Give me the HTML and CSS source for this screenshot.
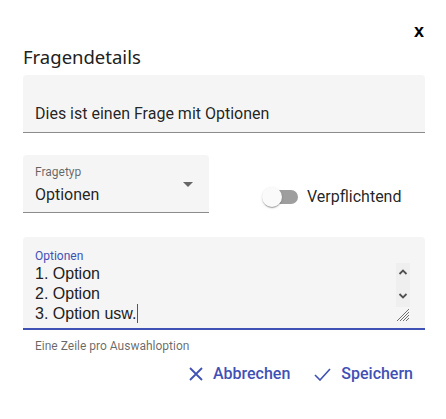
FILE: index.html
```html
<!DOCTYPE html>
<html>
<head>
<meta charset="utf-8">
<link rel="stylesheet" href="styles.css">
</head>
<body>
<div class="dialog">
  <div class="close-row"><span class="close">x</span></div>
  <h2 class="title">Fragendetails</h2>
  <div class="field full first">
    <div class="value question">Dies ist einen Frage mit Optionen</div>
  </div>
  <div class="row">
    <div class="field select">
      <div class="label">Fragetyp</div>
      <div class="value">Optionen</div>
      <span class="arrow"></span>
    </div>
    <div class="toggle">
      <span class="track"><span class="thumb"></span></span>
      <span class="toggle-label">Verpflichtend</span>
    </div>
  </div>
  <div class="field full area">
    <div class="label blue">Optionen</div>
    <div class="text">1. Option<br>2. Option<br>3. Option usw.<span class="caret"></span></div>
    <div class="scroll">
      <svg width="14" height="44" viewBox="0 0 14 44"><rect x="0" y="0" width="14" height="44" fill="#efefef"/><path d="M3.5 11 L7 7.5 L10.5 11" fill="none" stroke="#505050" stroke-width="1.8"/><path d="M3.5 31 L7 34.5 L10.5 31" fill="none" stroke="#505050" stroke-width="1.8"/></svg>
      <svg class="grip" width="14" height="14" viewBox="0 0 14 14"><path d="M1 13 L13 1 M4 13 L13 4 M7 13 L13 7 M10 13 L13 10" stroke="#707070" stroke-width="1"/></svg>
    </div>
  </div>
  <div class="hint">Eine Zeile pro Auswahloption</div>
  <div class="actions">
    <button class="btn"><svg width="14" height="14" viewBox="0 0 14 14"><path d="M1 1 L13 13 M13 1 L1 13" stroke="#3f51b5" stroke-width="1.8"/></svg>Abbrechen</button>
    <button class="btn"><svg width="17" height="13" viewBox="0 0 17 13"><path d="M1 7 L6 12 L16 1" fill="none" stroke="#3f51b5" stroke-width="1.6"/></svg>Speichern</button>
  </div>
</div>
</body>
</html>
```
FILE: styles.css
```css
html, body { margin: 0; padding: 0; background: #fff; }
body { font-family: Roboto, "Liberation Sans", sans-serif; color: rgba(0,0,0,0.87); }
.dialog { width: 402px; padding: 20px 21px 0 23px; }
.close-row { display: flex; justify-content: flex-end; height: 22px; padding-right: 1px; }
.close { font-family: "Liberation Sans", Arial, sans-serif; font-weight: bold; font-size: 18px; line-height: 22px; color: #000; }
.title { margin: 0; font-family: "Noto Sans", "Open Sans", sans-serif; font-weight: 400; font-size: 18.5px; line-height: 30px; color: #212121; height: 33px; }
.field { position: relative; background: #f5f5f5; border-radius: 4px 4px 0 0; border-bottom: 1px solid #8c8c8c; box-sizing: border-box; }
.full { width: 402px; }
.first { height: 58px; }
.question { padding: 27px 12px 0; font-size: 16px; line-height: 24px; }
.row { display: flex; align-items: flex-end; margin-top: 22px; }
.select { width: 186px; height: 58px; padding: 9px 12px 0; }
.label { font-size: 12px; line-height: 16px; color: rgba(0,0,0,0.6); }
.label.blue { color: #3f51b5; }
.select .value { font-size: 16px; line-height: 24px; margin-top: 3px; }
.arrow { position: absolute; right: 16px; top: 27px; width: 0; height: 0; border-left: 5px solid transparent; border-right: 5px solid transparent; border-top: 5px solid #666; }
.toggle { display: flex; align-items: center; margin-left: 53px; margin-bottom: 6px; }
.track { position: relative; width: 34px; height: 14px; border-radius: 7px; background: #9e9e9e; margin-right: 9px; margin-left: 2px; }
.thumb { position: absolute; left: -2px; top: -3px; width: 20px; height: 20px; border-radius: 50%; background: #fafafa; box-shadow: 0 2px 1px -1px rgba(0,0,0,.2), 0 1px 1px 0 rgba(0,0,0,.14), 0 1px 3px 0 rgba(0,0,0,.12); }
.toggle-label { font-size: 16px; line-height: 20px; }
.area { margin-top: 24px; height: 93px; border-bottom: 2px solid #3f51b5; padding: 11px 12px 0; }
.area .text { font-family: "Liberation Sans", Arial, sans-serif; font-size: 16px; line-height: 20px; color: #222; margin-top: 0; }
.caret { display: inline-block; width: 1px; height: 19px; background: #3f51b5; vertical-align: -4px; margin-left: 1px; }
.scroll { position: absolute; right: 15px; top: 26px; display: flex; flex-direction: column; }
.grip { margin-top: 1px; }
.hint { font-size: 12px; line-height: 16px; color: rgba(0,0,0,0.6); padding: 8px 12px 0; }
.actions { display: flex; justify-content: flex-end; gap: 24px; margin-top: 10px; padding-right: 12px; }
.btn { display: flex; align-items: center; gap: 10px; border: 0; background: none; padding: 0; font-family: Roboto, sans-serif; font-weight: 500; font-size: 16px; line-height: 20px; color: #3f51b5; cursor: pointer; }
```
